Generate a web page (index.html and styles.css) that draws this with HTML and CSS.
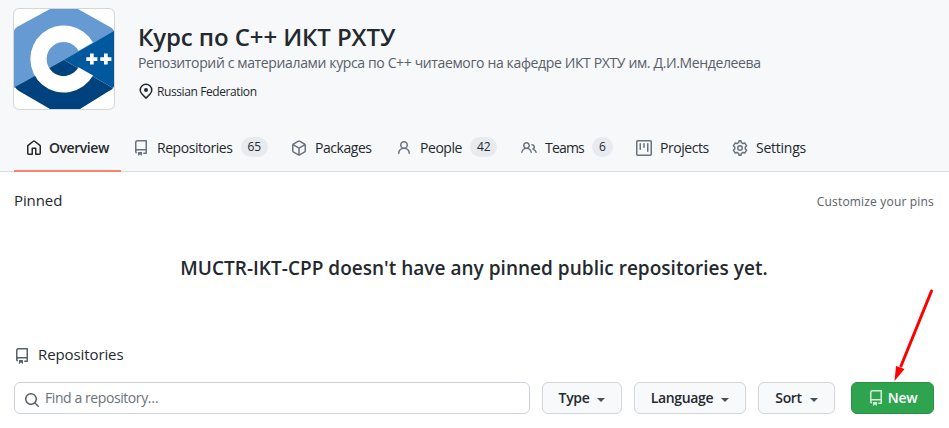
FILE: index.html
```html
<!DOCTYPE html>
<html lang="ru">
<head>
<meta charset="utf-8">
<title>Курс по C++ ИКТ РХТУ</title>
<link rel="stylesheet" href="styles.css">
</head>
<body>
<svg class="defs" width="0" height="0">
  <symbol id="repo" viewBox="0 0 16 16"><path fill-rule="evenodd" d="M2 2.5A2.5 2.5 0 014.5 0h8.75a.75.75 0 01.75.75v12.5a.75.75 0 01-.75.75h-2.5a.75.75 0 110-1.5h1.75v-2h-8a1 1 0 00-.714 1.7.75.75 0 01-1.072 1.05A2.495 2.495 0 012 11.5v-9zm10.5-1V9h-8c-.356 0-.694.074-1 .208V2.5a1 1 0 011-1h8zM5 12.25v3.25a.25.25 0 00.4.2l1.45-1.087a.25.25 0 01.3 0L8.6 15.7a.25.25 0 00.4-.2v-3.25a.25.25 0 00-.25-.25h-3.5a.25.25 0 00-.25.25z"/></symbol>
</svg>
<header class="head">
  <div class="profile">
    <div class="avatar">
      <svg width="100" height="100" viewBox="0 0 100 100">
        <path fill="#659ad2" d="M0 22Q0 20 3 18L36 0H64L96 18Q100 20 100 23L50 52L0 79Z"/>
        <path fill="#00427e" d="M1 78L50 51L99 79Q98 81 95 82L66 100H36L5 82Q2 80 1 78Z"/>
        <path fill="#00599c" d="M100 22V77Q100 78 99 79L50 51Z"/>
        <path fill="#fff" d="M79 33.5A33.500 33.500 0 1 0 79 66.500L64.500 58.300A17 17 0 1 1 64.500 41.800Z"/>
        <path fill="#fff" d="M76 44.500h3.700v3.700h3.700v3.700h-3.700v3.700h-3.700v-3.700h-3.700v-3.700h3.700zM90 44.500h3.700v3.700h3.700v3.700h-3.700v3.700h-3.700v-3.700h-3.700v-3.700h3.700z"/>
      </svg>
    </div>
    <div class="info">
      <h1>Курс по C++ ИКТ РХТУ</h1>
      <p class="desc">Репозиторий с материалами курса по C++ читаемого на кафедре ИКТ РХТУ им. Д.И.Менделеева</p>
      <div class="loc">
        <svg class="icon" viewBox="0 0 16 16"><path fill-rule="evenodd" d="M11.536 3.464a5 5 0 010 7.072L8 14.07l-3.536-3.535a5 5 0 117.072-7.072v.001zm1.06 8.132a6.500 6.500 0 10-9.192 0l3.535 3.536a1.500 1.500 0 002.122 0l3.535-3.536zM8 9a2 2 0 100-4 2 2 0 000 4z"/></svg>
        <span>Russian Federation</span>
      </div>
    </div>
  </div>
  <nav class="tabs">
    <a class="tab active"><svg class="icon" viewBox="0 0 16 16"><path fill-rule="evenodd" d="M8.156 1.835a.25.25 0 00-.312 0l-5.250 4.200a.25.25 0 00-.094.196v7.019c0 .138.112.25.25.25H5.500V8.250a.75.75 0 01.75-.75h3.500a.75.75 0 01.75.75v5.250h2.750a.25.25 0 00.25-.25V6.230a.25.25 0 00-.094-.195l-5.250-4.200zM6.906.664a1.750 1.750 0 012.187 0l5.250 4.200c.415.332.657.835.657 1.367v7.019A1.750 1.750 0 0113.250 15h-3.500a.75.75 0 01-.75-.75V9H7v5.250a.75.75 0 01-.75.75h-3.500A1.750 1.750 0 011 13.250V6.230c0-.531.242-1.034.657-1.366l5.250-4.200h-.001z"/></svg><span>Overview</span></a>
    <a class="tab t-repos"><svg class="icon"><use href="#repo"/></svg><span>Repositories</span><b>65</b></a>
    <a class="tab t-pack"><svg class="icon" viewBox="0 0 16 16"><path fill-rule="evenodd" d="M8.878.392a1.750 1.750 0 00-1.756 0l-5.250 3.045A1.750 1.750 0 001 4.951v6.098c0 .624.332 1.200.872 1.514l5.250 3.045a1.750 1.750 0 001.756 0l5.250-3.045c.54-.313.872-.89.872-1.514V4.951c0-.624-.332-1.200-.872-1.514L8.878.392zM7.875 1.690a.25.25 0 01.25 0l4.630 2.685L8 7.133 3.245 4.375l4.630-2.685zM2.500 5.677v5.372c0 .09.047.171.125.216l4.625 2.683V8.432L2.500 5.677zm6.250 8.271l4.625-2.683a.25.25 0 00.125-.216V5.677L8.750 8.432v5.516z"/></svg><span>Packages</span></a>
    <a class="tab t-people"><svg class="icon" viewBox="0 0 16 16"><path fill-rule="evenodd" d="M10.500 5a2.500 2.500 0 11-5 0 2.500 2.500 0 015 0zm.061 3.073a4 4 0 10-5.123 0 6.004 6.004 0 00-3.431 5.142.75.75 0 001.498.070 4.500 4.500 0 018.990 0 .75.75 0 101.498-.070 6.005 6.005 0 00-3.432-5.142z"/></svg><span>People</span><b>42</b></a>
    <a class="tab t-teams"><svg class="icon" viewBox="0 0 16 16"><path fill-rule="evenodd" d="M5.500 3.500a2 2 0 100 4 2 2 0 000-4zM2 5.500a3.500 3.500 0 115.898 2.549 5.507 5.507 0 013.034 4.084.75.75 0 11-1.482.235 4.001 4.001 0 00-7.900 0 .75.75 0 01-1.482-.236A5.507 5.507 0 013.102 8.050 3.490 3.490 0 012 5.500zM11 4a.75.75 0 100 1.500 1.500 1.500 0 01.666 2.844.75.75 0 00-.416.672v.352a.75.75 0 00.574.730c1.200.289 2.162 1.200 2.522 2.372a.75.75 0 101.434-.440 5.010 5.010 0 00-2.560-3.012A3 3 0 0011 4z"/></svg><span>Teams</span><b>6</b></a>
    <a class="tab t-projects"><svg class="icon" viewBox="0 0 16 16"><path fill-rule="evenodd" d="M1.750 0A1.750 1.750 0 000 1.750v12.500C0 15.216.784 16 1.750 16h12.500A1.750 1.750 0 0016 14.250V1.750A1.750 1.750 0 0014.250 0H1.750zM1.500 1.750a.25.25 0 01.25-.25h12.500a.25.25 0 01.25.25v12.500a.25.25 0 01-.25.25H1.750a.25.25 0 01-.25-.25V1.750zM11.750 3a.75.75 0 00-.75.75v7.500a.75.75 0 001.500 0v-7.500a.75.75 0 00-.75-.75zm-8.250.75a.75.75 0 011.500 0v5.500a.75.75 0 01-1.500 0v-5.500zM8 3a.75.75 0 00-.75.75v3.500a.75.75 0 001.500 0v-3.500A.75.75 0 008 3z"/></svg><span>Projects</span></a>
    <a class="tab t-settings"><svg class="icon" viewBox="0 0 16 16"><g fill="none" stroke="currentColor" stroke-width="1.500" stroke-linejoin="round"><circle cx="8" cy="8" r="2.250"/><path d="M7.100 .8h1.800l.55 1.900 1.500.85 1.950-.5 1.700 2.750-1.350 1.400v1.600l1.350 1.400-1.700 2.750-1.950-.5-1.500.85-.55 1.900H7.100l-.55-1.900-1.500-.85-1.950.5-1.700-2.750 1.350-1.400V7.200L1.400 5.800l1.700-2.750 1.950.5 1.500-.85z"/></g></svg><span>Settings</span></a>
  </nav>
</header>
<main>
  <div class="pins"><h2>Pinned</h2><a>Customize your pins</a></div>
  <h3>MUCTR-IKT-CPP doesn't have any pinned public repositories yet.</h3>
  <div class="repos"><svg class="icon"><use href="#repo"/></svg><h2>Repositories</h2></div>
  <div class="filters">
    <div class="search"><svg class="icon" viewBox="0 0 16 16"><path fill-rule="evenodd" d="M11.500 7a4.499 4.499 0 11-8.998 0A4.499 4.499 0 0111.500 7zm-.82 4.740a6 6 0 111.060-1.060l3.040 3.040a.75.75 0 11-1.060 1.060l-3.040-3.040z"/></svg><span>Find a repository…</span></div>
    <button class="btn type"><span>Type</span><i></i></button>
    <button class="btn lang"><span>Language</span><i></i></button>
    <button class="btn sort"><span>Sort</span><i></i></button>
    <button class="btn new"><svg class="icon"><use href="#repo"/></svg><span>New</span></button>
  </div>
</main>
<svg class="arrow" width="44" height="96" viewBox="0 0 44 96"><path d="M38.500 4L8 79" fill="none" stroke="#f00" stroke-width="3" stroke-linecap="round"/><path d="M1.500 94L3 79L11.500 82Z" fill="#f00"/></svg>
</body>
</html>
```
FILE: styles.css
```css
* { box-sizing: border-box; }
body { margin: 0; width: 949px; height: 428px; overflow: hidden; position: relative; background: #fff; color: #24292e; font: 14px/20px "Open Sans", "Noto Sans", sans-serif; }
h1, h2, h3, p { margin: 0; font-weight: 400; white-space: nowrap; }
.defs { position: absolute; }
.icon { width: 16px; height: 16px; flex: none; fill: currentColor; display: block; }
.head { height: 172px; background: #f6f8fa; border-bottom: 1px solid #d8dce2; padding: 8px 0 0 13px; }
.profile { display: flex; height: 116px; }
.avatar { width: 102px; height: 102px; border: 1px solid #d3d6da; border-radius: 6px; overflow: hidden; background: #fff; flex: none; }
.avatar svg { display: block; }
.info { padding: 14px 0 0 23px; }
h1 { font-size: 24px; line-height: 30px; font-weight: 600; letter-spacing: -.1px; }
.desc { color: #586069; line-height: 20px; margin-top: 1px; letter-spacing: -.365px; }
.loc { display: flex; align-items: center; gap: 3px; margin: 7px 0 0 0; font-size: 12px; letter-spacing: -.4px; }
.loc span { padding-top: 2px; }
.tabs { display: grid; grid-template-columns: 107px 158px 105px 125px 115px 96px 100px; height: 48px; padding-left: 1px; }
.tab { display: flex; align-items: center; padding: 0 0 2px 12px; white-space: nowrap; height: 48px; letter-spacing: -.45px; }
.tab span { padding-top: 1px; }
.tab .icon { color: #6a737d; margin: 1px 8px 0 0; }
.tab b { font-size: 12px; font-weight: 500; line-height: 20px; height: 20px; min-width: 21px; padding: 0 7px; border-radius: 10px; background: #e7eaef; margin-left: 8px; letter-spacing: -.2px; }
.t-teams span { letter-spacing: -.8px; }
.t-settings span { letter-spacing: -.25px; }
.active { border-bottom: 2px solid #f9826c; font-weight: 600; padding-bottom: 0; }
.active .icon { color: #24292e; margin-right: 7px; }
main { padding: 16px 15px 0 14px; }
h2 { font-size: 15px; line-height: 24px; letter-spacing: -.1px; }
.pins { display: flex; justify-content: space-between; align-items: center; height: 24px; }
.pins a { font-size: 12px; color: #586069; padding-top: 4px; letter-spacing: .18px; }
h3 { font-size: 19px; line-height: 30px; font-weight: 600; text-align: center; margin-top: 41px; letter-spacing: .02px; }
.repos { display: flex; align-items: center; gap: 8px; margin-top: 59px; height: 24px; }
.repos .icon { color: #586069; margin-top: 4px; }
.filters { display: flex; margin-top: 16px; }
.search { width: 516px; height: 32px; border: 1px solid #cfd4dc; border-radius: 6px; display: flex; align-items: center; padding-left: 9px; color: #6a737d; letter-spacing: -.42px; }
.search .icon { margin: 4px 5px 0 0; color: #586069; }
.btn { height: 32px; border: 1px solid #d2d6da; border-radius: 6px; background: #f8f9fb; color: #24292e; font: 600 14px/20px "Open Sans", sans-serif; letter-spacing: -.35px; padding: 0; display: flex; align-items: center; justify-content: center; }
.btn i { border: 4px solid transparent; border-top-color: #4b5056; border-bottom: 0; margin: 3px 0 0 8px; }
.type { width: 80px; margin-left: 12px; }
.lang { width: 112px; margin-left: 12px; }
.sort { width: 77px; margin-left: 12px; }
.new { width: 83px; margin-left: 16px; background: #2ea44f; border-color: #2a9147; color: #fff; }
.new .icon { margin-right: 4px; color: #d5edd9; }
.arrow { position: absolute; left: 893px; top: 287px; }
```
